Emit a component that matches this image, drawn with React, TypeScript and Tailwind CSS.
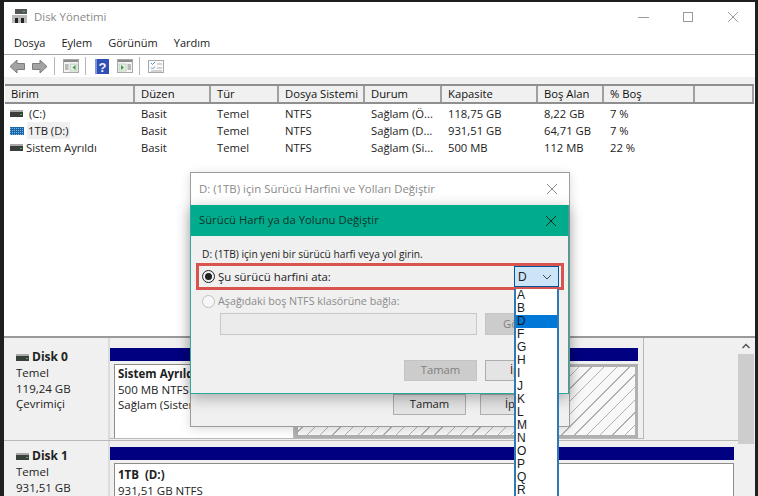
import React from "react";

const font = { fontFamily: '"Open Sans", "Noto Sans", sans-serif' };

const columns = [
  { label: "Birim", width: "w-[130px]" },
  { label: "Düzen", width: "w-[76px]" },
  { label: "Tür", width: "w-[68px]" },
  { label: "Dosya Sistemi", width: "w-[86px]" },
  { label: "Durum", width: "w-[77px]" },
  { label: "Kapasite", width: "w-[96px]" },
  { label: "Boş Alan", width: "w-[66px]" },
  { label: "% Boş", width: "w-[91px]" },
  { label: "", width: "flex-1" },
];

const rows = [
  { name: " (C:)", type: "gray", cells: ["Basit", "Temel", "NTFS", "Sağlam (Ö...", "118,75 GB", "8,22 GB", "7 %"] },
  { name: "1TB (D:)", type: "blue", cells: ["Basit", "Temel", "NTFS", "Sağlam (D...", "931,51 GB", "64,71 GB", "7 %"] },
  { name: "Sistem Ayrıldı", type: "gray", cells: ["Basit", "Temel", "NTFS", "Sağlam (Si...", "500 MB", "112 MB", "22 %"] },
];

const letters = ["A", "B", "D", "F", "G", "H", "I", "J", "K", "L", "M", "N", "O", "P", "Q", "R"];

function DriveIcon({ blue }: { blue?: boolean }) {
  if (blue) {
    return (
      <svg width="14" height="8" viewBox="0 0 14 8" className="shrink-0">
        <rect width="14" height="8" fill="#1f66a8" />
        <path d="M0 1.500h14M0 3.500h14M0 5.500h14M0 7.500h14" stroke="#6fb8ea" strokeWidth="1" strokeDasharray="1 1" />
      </svg>
    );
  }
  return (
    <svg width="13" height="7" viewBox="0 0 13 7" className="shrink-0">
      <rect width="13" height="2" fill="#a9a9a9" />
      <rect y="2" width="13" height="5" fill="#3a3f3c" />
      <rect x="10" y="4" width="2" height="1" fill="#39c24a" />
    </svg>
  );
}

function AppIcon() {
  return (
    <svg width="16" height="15" viewBox="0 0 16 15">
      <rect x="3" y="0" width="12" height="5" fill="#555" />
      <rect x="11" y="2" width="2" height="1" fill="#3fc25a" />
      <rect x="0" y="6" width="15" height="8" fill="#b9b9b9" />
      <rect x="3" y="9" width="3" height="5" fill="#222" />
      <rect x="9" y="9" width="3" height="5" fill="#222" />
    </svg>
  );
}

function ArrowIcon({ right }: { right?: boolean }) {
  return (
    <svg width="16" height="15" viewBox="0 0 16 15">
      <path
        d={right ? "M0.500 4.500h7.500V1l7 6.500-7 6.500v-3.500H0.500z" : "M15.500 4.500H8V1L1 7.500 8 14v-3.500h7.500z"}
        fill="#a3a3a3"
        stroke="#7d7d7d"
      />
    </svg>
  );
}

function PaneIcon({ right }: { right?: boolean }) {
  return (
    <svg width="16" height="14" viewBox="0 0 16 14">
      <rect x="0.500" y="0.500" width="15" height="13" fill="#f4f4f4" stroke="#a8a8a8" />
      <rect x="1" y="1" width="14" height="2" fill="#8a8a8a" />
      <rect x={right ? 2 : 7} y="5" width="7" height="7" fill="#e3efe3" stroke="#9ab89a" strokeWidth="0.500" />
      <path d={right ? "M4 6l3 2.500L4 11z" : "M12.500 6l-3 2.500 3 2.500z"} fill="#3f9a4e" />
      <path d={right ? "M10.500 6h3.500M10.500 8h3.500M10.500 10h3.500" : "M2 6h3.500M2 8h3.500M2 10h3.500"} stroke="#7f7f7f" />
    </svg>
  );
}

function HelpIcon() {
  return (
    <svg width="14" height="15" viewBox="0 0 14 15">
      <rect width="14" height="15" fill="#2f4fb4" />
      <rect x="0" y="0" width="2" height="15" fill="#7f95dd" />
      <text x="7.500" y="12.500" fontSize="13" fontWeight="700" fill="#f2f2f2" textAnchor="middle" fontFamily="Liberation Sans">?</text>
    </svg>
  );
}

function ListIcon() {
  return (
    <svg width="16" height="13" viewBox="0 0 16 13">
      <rect x="0.500" y="0.500" width="15" height="12" fill="#fbfbfb" stroke="#a8a8a8" />
      <path d="M3 3l1.500 1.500L7 2M3 7.500l1.500 1.500L7 6.500" stroke="#5a8fd0" fill="none" />
      <path d="M9 4h5M9 8h5M3 11h11" stroke="#a9a9a9" />
    </svg>
  );
}

function CloseX({ className }: { className: string }) {
  return (
    <svg width="12" height="12" viewBox="0 0 12 12" className={className}>
      <path d="M1 1l10 10M11 1L1 11" stroke="currentColor" strokeWidth="1" />
    </svg>
  );
}

function Divider() {
  return <div className="w-px h-[18px] bg-[#b5b5b5]" />;
}

function Toolbar() {
  return (
    <div className="h-[23px] flex items-center pl-[5px] border-t border-[#a8a8a8] bg-white">
      <ArrowIcon />
      <div className="w-[7px]" />
      <ArrowIcon right />
      <div className="w-[6px]" />
      <Divider />
      <div className="w-[8px]" />
      <PaneIcon />
      <div className="w-[6px]" />
      <Divider />
      <div className="w-[9px]" />
      <HelpIcon />
      <div className="w-[8px]" />
      <PaneIcon right />
      <div className="w-[6px]" />
      <Divider />
      <div className="w-[8px]" />
      <ListIcon />
    </div>
  );
}

function VolumeTable() {
  return (
    <div className="h-[252px] shrink-0 bg-white">
      <div className="flex h-[20px] mx-px border-t-2 border-b-2 border-[#8f8f8f] bg-[#f0f0f0]">
        {columns.map((c, i) => (
          <div
            key={i}
            className={`${c.width} shrink-0 border-r-2 border-[#a0a0a0] pl-[6px] text-[11.25px] leading-[16px] text-[#111] whitespace-nowrap`}
          >
            {c.label}
          </div>
        ))}
      </div>
      <div className="pt-[1px]">
        {rows.map((r) => (
          <div key={r.name} className="flex h-[17px] mx-px text-[11.25px] leading-[17px] text-[#222]">
            <div className="w-[130px] shrink-0 flex items-center gap-[3px] pl-[5px]">
              <DriveIcon blue={r.type === "blue"} />
              <span className={r.type === "blue" ? "bg-[#f0f0f0] px-px whitespace-pre" : "whitespace-pre"}>
                {r.name}
              </span>
            </div>
            {r.cells.map((cell, i) => (
              <div key={i} className={`${columns[i + 1].width} shrink-0 pl-[6px] whitespace-nowrap`}>
                {cell}
              </div>
            ))}
          </div>
        ))}
      </div>
    </div>
  );
}

function DiskLabel({ name, lines, top }: { name: string; lines: string[]; top: string }) {
  return (
    <div className={`w-[106px] shrink-0 pl-[12px] ${top} text-[11.500px] leading-[15.500px] text-[#222] border-r-2 border-[#dcdcdc]`}>
      <div className="flex items-center gap-[3px] font-bold h-[16px] text-[12px]">
        <DriveIcon />
        <span>{name}</span>
      </div>
      {lines.map((l) => (
        <div key={l}>{l}</div>
      ))}
    </div>
  );
}

function DiskArea() {
  return (
    <div className="flex-1 flex min-h-0 bg-[#f0f0f0] border-t-2 border-[#9a9a9a]">
      <div className="flex-1 min-w-0 overflow-hidden">
        {/* disk 0 */}
        <div className="flex h-[103px] border-b border-[#b8b8b8]">
          <DiskLabel name="Disk 0" lines={["Temel", "119,24 GB", "Çevrimiçi"]} top="pt-[11px]" />
          <div className="w-[534px] shrink-0 pt-[10px] pr-[5px] h-[101px] border-r border-b border-[#b8b8b8]">
            <div className="h-[13px] bg-[#000080]" />
            <div className="flex h-[74px] mt-[3px] pl-[4px]">
              <div className="w-[181px] shrink-0 bg-white border-l border-t border-[#8c8c8c] border-r-2 border-r-[#b8b8b8] pl-[3px] pt-[1px] text-[11.500px] leading-[15.500px] text-[#222]">
                <div className="font-bold">Sistem Ayrıldı</div>
                <div>500 MB NTFS</div>
                <div>Sağlam (Sistem, Etkin)</div>
              </div>
              <div className="flex-1 border-[3px] border-[#b0b0b0] bg-[#f8f8f8] bg-[repeating-linear-gradient(135deg,#b0b0b0_0px,#b0b0b0_1px,#f8f8f8_1px,#f8f8f8_9px)]" />
            </div>
          </div>
        </div>
        {/* disk 1 */}
        <div className="flex h-[60px]">
          <DiskLabel name="Disk 1" lines={["Temel", "931,51 GB"]} top="pt-[7px]" />
          <div className="flex-1 pt-[6px] pr-[4px]">
            <div className="h-[13px] bg-[#000080]" />
            <div className="h-[40px] mt-[3px] ml-[4px] bg-white border-l border-t border-r border-[#8c8c8c] pl-[3px] pt-[3px] text-[11.500px] leading-[15.500px] text-[#222]">
              <div className="font-bold">1TB&nbsp; (D:)</div>
              <div>931,51 GB NTFS</div>
            </div>
          </div>
        </div>
      </div>
      <div className="w-[16px] shrink-0 flex flex-col items-center pt-[2px] bg-[#f0f0f0] mr-px">
        <svg width="10" height="12" viewBox="0 0 10 12">
          <path d="M1.500 8L5 4.500 8.500 8" fill="none" stroke="#555" strokeWidth="1.500" />
        </svg>
        <div className="w-full h-[90px] bg-[#cdcdcd] mt-[2px]" />
      </div>
    </div>
  );
}

function DialogButton({ label, muted }: { label: string; muted?: boolean }) {
  return (
    <div
      className={
        muted
          ? "w-[73px] h-[21px] bg-[#cccccc] border border-[#c4c4c4] flex items-center justify-center text-[11.250px] text-[#808080]"
          : "w-[73px] h-[21px] bg-[#e4e4e4] border border-[#adadad] flex items-center justify-center text-[11.250px] text-[#222]"
      }
    >
      {label}
    </div>
  );
}

function BackDialog() {
  return (
    <div className="absolute left-[190px] top-[172px] w-[380px] h-[255px] bg-[#f0f0f0] border border-[#9c9c9c] shadow-[0_2px_10px_rgba(0,0,0,0.15)]">
      <div className="h-[32px] bg-white flex items-center justify-between pl-[8px] pr-[11px] text-[11.400px] text-[#8a8a8a]">
        <span>D: (1TB) için Sürücü Harfini ve Yolları Değiştir</span>
        <CloseX className="text-[#8a8a8a]" />
      </div>
      <div className="flex gap-[14px] pl-[202px] mt-[189px]">
        <DialogButton label="Tamam" />
        <DialogButton label="İptal" />
      </div>
    </div>
  );
}

function FrontDialog() {
  return (
    <div className="absolute left-[190px] top-[205px] w-[379px] h-[189px] bg-[#f0f0f0] border-x border-b border-[#2fa89b] shadow-[0_4px_14px_rgba(0,0,0,0.3)]">
      <div className="h-[31px] bg-[#00ac8c] flex items-center justify-between pl-[8px] pr-[11px] text-[11.300px] text-[#12332c]">
        <span>Sürücü Harfi ya da Yolunu Değiştir</span>
        <CloseX className="text-[#102a25]" />
      </div>
      <div className="pt-[10px] pl-[11px] text-[10.200px] leading-[16px] text-[#222]">D: (1TB) için yeni bir sürücü harfi veya yol girin.</div>
      <div className="ml-[5px] mt-[1px] w-[368px] h-[27px] border-[3px] border-[#d9534f] flex items-center justify-between pl-[3px] pr-[2px] text-[11.400px] text-[#222]">
        <div className="flex items-center gap-[3px]">
          <div className="w-[13px] h-[13px] rounded-full border border-[#222] flex items-center justify-center">
            <div className="w-[7px] h-[7px] rounded-full bg-[#222]" />
          </div>
          <span>Şu sürücü harfini ata:</span>
        </div>
        <div className="w-[45px] h-[21px] bg-[#cce4f7] border border-[#005499] flex items-center justify-between pl-[3px] pr-[6px]">
          <span className="text-[12px]" style={{ fontFamily: '"Liberation Sans", sans-serif' }}>D</span>
          <svg width="10" height="6" viewBox="0 0 10 6">
            <path d="M1 1l4 4 4-4" fill="none" stroke="#444" />
          </svg>
        </div>
      </div>
      <div className="ml-[11px] mt-[3px] flex items-center gap-[3px] h-[16px] text-[10.750px] text-[#8c8c8c]">
        <div className="w-[13px] h-[13px] rounded-full border border-[#c0c0c0] bg-[#f7f7f7]" />
        <span>Aşağıdaki boş NTFS klasörüne bağla:</span>
      </div>
      <div className="flex gap-[8px] ml-[29px] mt-[4px]">
        <div className="w-[257px] h-[22px] bg-[#ebebeb] border border-[#c8c8c8]" />
        <div className="w-[73px] h-[22px] bg-[#cccccc] border border-[#c4c4c4] flex items-center pl-[17px] text-[11.250px] text-[#808080]">
          Gözat
        </div>
      </div>
      <div className="flex gap-[8px] ml-[213px] mt-[25px]">
        <DialogButton label="Tamam" muted />
        <DialogButton label="İptal" />
      </div>
    </div>
  );
}

function LetterList() {
  return (
    <div
      className="absolute left-[514px] top-[289px] w-[45px] h-[207px] overflow-hidden bg-white border-x-2 border-[#2f7ab5] text-[12px] leading-[13px] text-[#1a1a1a]"
      style={{ fontFamily: '"Liberation Sans", sans-serif' }}
    >
      {letters.map((l) => (
        <div key={l} className={l === "D" ? "h-[13px] pl-[1px] bg-[#0078d7]" : "h-[13px] pl-[1px]"}>
          {l}
        </div>
      ))}
    </div>
  );
}

export default function App() {
  return (
    <div className="relative w-[758px] h-[496px] overflow-hidden bg-[#1f1f1f] pl-[4px] pr-[3px] pt-[2px]" style={font}>
      <div className="h-full flex flex-col bg-white">
        <div className="h-[30px] shrink-0 flex items-center justify-between pl-[8px] pr-[16px]">
          <div className="flex items-center gap-[6px] text-[11.400px] text-[#8a8a8a]">
            <AppIcon />
            <span>Disk Yönetimi</span>
          </div>
          <div className="flex items-center gap-[34px] text-[#9a9a9a]">
            <div className="w-[11px] h-px bg-[#9a9a9a]" />
            <div className="w-[10px] h-[10px] border border-[#9a9a9a]" />
            <CloseX className="text-[#9a9a9a]" />
          </div>
        </div>
        <div className="h-[22px] shrink-0 flex items-center gap-[16px] pl-[10px] text-[11px] text-[#222]">
          <span>Dosya</span>
          <span>Eylem</span>
          <span>Görünüm</span>
          <span>Yardım</span>
        </div>
        <Toolbar />
        <div className="h-[7px] shrink-0 bg-[#f0f0f0]" />
        <VolumeTable />
        <DiskArea />
      </div>
      <BackDialog />
      <FrontDialog />
      <LetterList />
    </div>
  );
}
